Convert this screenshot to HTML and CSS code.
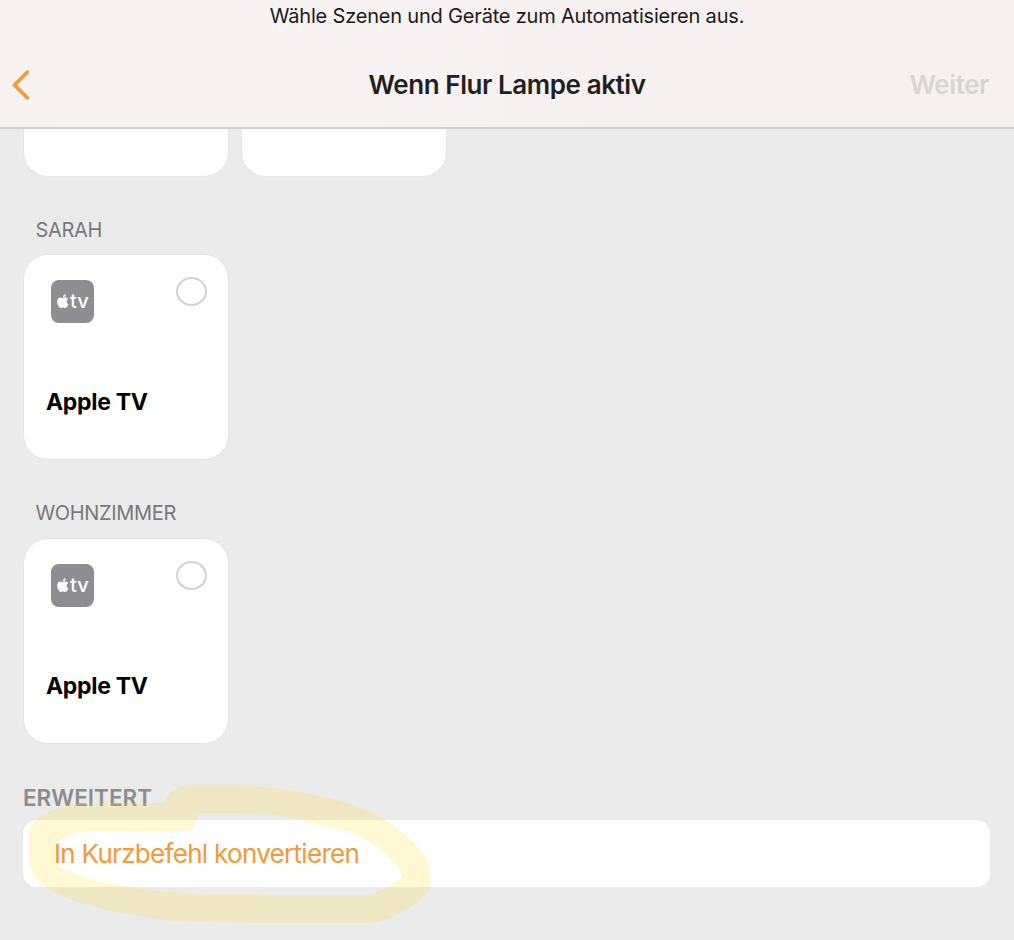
FILE: index.html
```html
<!DOCTYPE html>
<html lang="de">
<head>
<meta charset="utf-8">
<title>Wenn Flur Lampe aktiv</title>
<link rel="stylesheet" href="styles.css">
</head>
<body>
<svg class="sprite" aria-hidden="true">
  <symbol id="apple" viewBox="0 0 24 24">
    <path d="M18.7 12.8c0-2.8 2.3-4.1 2.4-4.2-1.300-1.900-3.300-2.200-4.100-2.200-1.700-.2-3.400 1-4.300 1-.9 0-2.200-1-3.700-1-1.900 0-3.600 1.100-4.600 2.800-2 3.400-.5 8.400 1.400 11.200.9 1.300 2 2.900 3.500 2.800 1.400-.1 1.900-.9 3.600-.9s2.200.9 3.700.9 2.500-1.400 3.400-2.700c1.100-1.600 1.500-3.100 1.500-3.200-.1 0-2.800-1.100-2.800-4.500zM16 4.600c.8-1 1.300-2.300 1.100-3.600-1.100 0-2.500.7-3.300 1.700-.7.800-1.300 2.200-1.200 3.400 1.300.1 2.600-.6 3.400-1.500z"/>
  </symbol>
</svg>
<div class="screen">
  <header class="header">
    <p class="hint">Wähle Szenen und Geräte zum Automatisieren aus.</p>
    <nav class="bar">
      <button class="back" aria-label="Zurück">
        <svg width="20" height="32" viewBox="0 0 20 32"><path d="M16.500 3 3.500 16 16.500 29"/></svg>
      </button>
      <h1 class="title">Wenn Flur Lampe aktiv</h1>
      <span class="next">Weiter</span>
    </nav>
  </header>
  <main class="content">
    <div class="row">
      <div class="card card-cut"></div>
      <div class="card card-cut"></div>
    </div>
    <section class="room">
      <h2 class="room-name">SARAH</h2>
      <div class="card">
        <div class="card-top">
          <span class="device"><svg class="apple"><use href="#apple"/></svg><span class="tv">tv</span></span>
          <span class="check"></span>
        </div>
        <span class="card-name">Apple TV</span>
      </div>
    </section>
    <section class="room">
      <h2 class="room-name room-second">WOHNZIMMER</h2>
      <div class="card">
        <div class="card-top">
          <span class="device"><svg class="apple"><use href="#apple"/></svg><span class="tv">tv</span></span>
          <span class="check"></span>
        </div>
        <span class="card-name">Apple TV</span>
      </div>
    </section>
    <section class="advanced">
      <h2 class="advanced-title">ERWEITERT</h2>
      <a class="convert">In Kurzbefehl konvertieren</a>
    </section>
  </main>
  <svg class="marker" width="420" height="150" viewBox="20 780 420 150" aria-hidden="true">
    <path fill-rule="evenodd" d="M164 803C168 792 178 785 194 785H230Q270 787 296 791Q340 800 362 808Q376 813 388 822C405 833 415 843 424 855Q430.500 865 430.500 876V886Q430 891 424 896Q394 923 365 923H260Q230 922 200 922Q165 921 145 917Q102 911 67 898Q50 892 38 880Q29 872 29 858V832Q31 822 42 816Q62 804 78 803ZM195 813Q199 818 195 824Q192 831 184 831H83Q60 839 56 844V862Q61 870 75 874Q91 882 130 887Q145 891 170 892Q190 894 210 894H260L264 895H368Q385 891 402 878V874Q391 853 362 838Q350 831 325 826L300 820Q268 812 230 813Z"/>
  </svg>
</div>
</body>
</html>
```
FILE: styles.css
```css
* { box-sizing: border-box; }

body {
  margin: 0;
  background: #ebebeb;
  font-family: Inter, "Liberation Sans", sans-serif;
  color: #000;
}

h1, h2, p { margin: 0; }

.sprite { display: none; }

.screen {
  position: relative;
  height: 940px;
  overflow: hidden;
}

.header {
  height: 129px;
  border-bottom: 2px solid #d0cece;
  background: linear-gradient(90deg, #f8f2f1, #f9f4f3 30%, #f6f0f0 60%, #f6f1f0);
}

.hint {
  height: 32px;
  text-align: center;
  font-size: 20px;
  letter-spacing: -0.19px;
  line-height: 32px;
  color: #1a1a1a;
}

.bar {
  display: grid;
  grid-template-columns: 1fr auto 1fr;
  align-items: center;
  height: 106px;
  padding: 0 25px;
}

.back {
  width: 20px;
  height: 32px;
  margin-left: -14px;
  padding: 0;
  border: 0;
  background: none;
}

.back path {
  fill: none;
  stroke: #f29a37;
  stroke-width: 3.7;
  stroke-linecap: round;
  stroke-linejoin: round;
}

.title, .next {
  font-size: 26px;
  font-weight: 600;
  letter-spacing: -0.43px;
  line-height: 32px;
  color: #1f2120;
  white-space: nowrap;
}

.next { justify-self: end; color: #d9d5d4; }

.content { padding: 0 24px 0 23px; }

.row { display: flex; gap: 12px; }

.card {
  width: 206px;
  height: 206px;
  padding: 23px 21px 0 22px;
  border: 1px solid #e4e4e9;
  border-radius: 25px;
  background: #fff;
}

.card-cut {
  height: 48px;
  border-top: 0;
  border-radius: 0 0 25px 25px;
}

.room-name {
  height: 77px;
  padding: 37px 0 0 12.500px;
  font-size: 20px;
  font-weight: 400;
  letter-spacing: -0.35px;
  line-height: 32px;
  color: #78787a;
}

.room-second { height: 78px; }

.card-top {
  display: flex;
  justify-content: space-between;
  padding-left: 5px;
}

.device {
  display: flex;
  align-items: center;
  width: 43px;
  height: 43px;
  margin-top: 2px;
  padding: 0 0 1px 4px;
  border-radius: 8px;
  background: #8e8d92;
  color: #fff;
}

.apple { width: 15px; height: 16px; fill: #fff; }

.tv { font-size: 20px; font-weight: 500; line-height: 24px; }

.check {
  width: 31px;
  height: 29px;
  margin-top: -1px;
  border: 2px solid #d2d2d2;
  border-radius: 50%;
}

.card-name {
  display: block;
  margin-top: 63px;
  font-size: 23px;
  font-weight: 700;
  letter-spacing: -0.3px;
  line-height: 32px;
  white-space: nowrap;
}

.advanced { padding-top: 37px; }

.advanced-title {
  height: 39px;
  font-size: 22.500px;
  font-weight: 600;
  line-height: 34px;
  color: #8c8c90;
}

.convert {
  display: flex;
  align-items: center;
  height: 67px;
  padding-left: 31px;
  border-radius: 14px;
  background: #fff;
  font-size: 26px;
  letter-spacing: -0.7px;
  color: #f29a37;
}

.marker {
  position: absolute;
  left: 20px;
  top: 780px;
  fill: rgba(255, 222, 34, 0.2);
}
```
